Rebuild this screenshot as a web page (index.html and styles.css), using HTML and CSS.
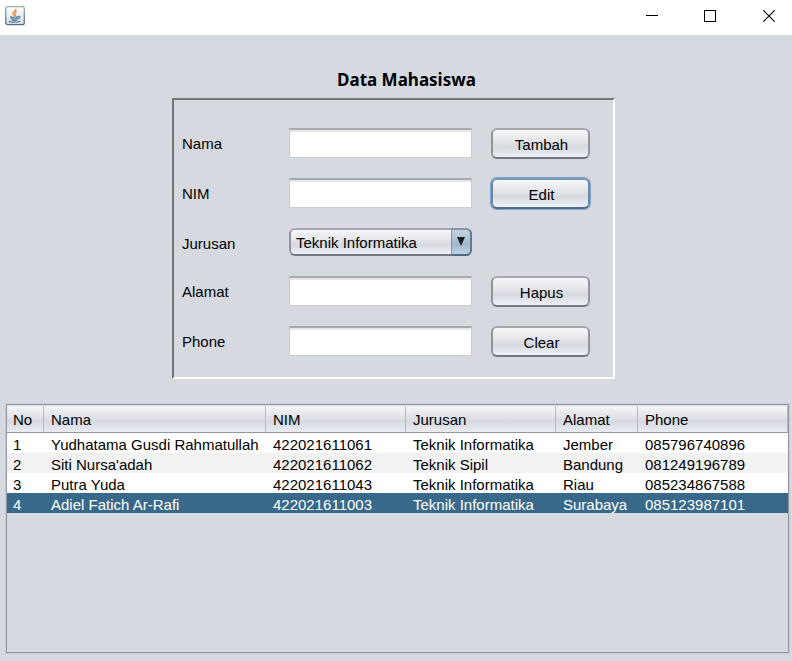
FILE: index.html
```html
<!DOCTYPE html>
<html lang="id">
<head>
<meta charset="utf-8">
<meta name="viewport" content="width=device-width, initial-scale=1">
<title>Data Mahasiswa</title>
<link rel="stylesheet" href="styles.css">
</head>
<body>
<header class="titlebar">
  <svg class="app-icon" width="20" height="20" viewBox="0 0 20 20" aria-hidden="true">
    <defs>
      <linearGradient id="tile" x1="0" y1="0" x2="0" y2="1">
        <stop offset="0" stop-color="#ffffff"/>
        <stop offset="1" stop-color="#d3dbe2"/>
      </linearGradient>
      <linearGradient id="edge" x1="0" y1="0" x2="0" y2="1">
        <stop offset="0" stop-color="#a3adb6"/>
        <stop offset="1" stop-color="#4f6f88"/>
      </linearGradient>
    </defs>
    <rect x="0.7" y="0.7" width="18.6" height="18" rx="2" fill="url(#tile)" stroke="url(#edge)" stroke-width="1.3"/>
    <path d="M10.7 2.8C11.3 5 7.6 5.6 8 7.6C8.2 8.7 9.2 9.2 9.3 10.2M11.9 5.2C9.8 6.2 9.3 6.9 10.3 8.2C10.9 9 10.3 9.7 9.9 10.2" fill="none" stroke="#ec9a55" stroke-width="1.5"/>
    <path d="M5.2 10.6C7 11.4 11 11.4 13.4 10.6M5.8 11.2C6 13.8 12.4 13.8 13 11.2M13.4 10.4C15.8 9.8 15.4 12 12.9 12.6M6.5 13.8C8 14.7 11 14.7 12.5 13.8M4 15C4.6 16.6 13.8 16.6 15.4 14.8" fill="none" stroke="#6588a3" stroke-width="1.2"/>
  </svg>
  <div class="window-controls">
    <button class="window-button" type="button" aria-label="Minimize">
      <svg width="12" height="12" viewBox="0 0 12 12"><path d="M0 5.5H12" stroke="#000"/></svg>
    </button>
    <button class="window-button" type="button" aria-label="Maximize">
      <svg width="12" height="12" viewBox="0 0 12 12"><rect x="0.5" y="0.5" width="11" height="11" fill="none" stroke="#000"/></svg>
    </button>
    <button class="window-button" type="button" aria-label="Close">
      <svg width="12" height="12" viewBox="0 0 12 12"><path d="M0.3 0.3L11.7 11.7M11.7 0.3L0.3 11.7" stroke="#000" stroke-width="1.1"/></svg>
    </button>
  </div>
</header>
<main class="content">
  <h1 class="title">Data Mahasiswa</h1>
  <form class="panel">
    <label class="label" for="nama">Nama</label>
    <input class="field" id="nama" type="text">
    <button class="button" type="button">Tambah</button>

    <label class="label" for="nim">NIM</label>
    <input class="field" id="nim" type="text">
    <button class="button button-active" type="button">Edit</button>

    <label class="label" for="jurusan">Jurusan</label>
    <div class="combo">
      <select class="combo-select" id="jurusan">
        <option>Teknik Informatika</option>
        <option>Teknik Sipil</option>
      </select>
    </div>

    <label class="label row-start" for="alamat">Alamat</label>
    <input class="field" id="alamat" type="text">
    <button class="button" type="button">Hapus</button>

    <label class="label" for="phone">Phone</label>
    <input class="field" id="phone" type="text">
    <button class="button" type="button">Clear</button>
  </form>
  <div class="table-pane">
    <table class="table">
      <colgroup>
        <col class="col-no"><col class="col-nama"><col class="col-nim"><col class="col-jurusan"><col class="col-alamat"><col>
      </colgroup>
      <thead>
        <tr><th>No</th><th>Nama</th><th>NIM</th><th>Jurusan</th><th>Alamat</th><th>Phone</th></tr>
      </thead>
      <tbody>
        <tr><td>1</td><td>Yudhatama Gusdi Rahmatullah</td><td>422021611061</td><td>Teknik Informatika</td><td>Jember</td><td>085796740896</td></tr>
        <tr><td>2</td><td>Siti Nursa'adah</td><td>422021611062</td><td>Teknik Sipil</td><td>Bandung</td><td>081249196789</td></tr>
        <tr><td>3</td><td>Putra Yuda</td><td>422021611043</td><td>Teknik Informatika</td><td>Riau</td><td>085234867588</td></tr>
        <tr class="selected"><td>4</td><td>Adiel Fatich Ar-Rafi</td><td>422021611003</td><td>Teknik Informatika</td><td>Surabaya</td><td>085123987101</td></tr>
      </tbody>
    </table>
  </div>
</main>
</body>
</html>
```
FILE: styles.css
```css
* {
  box-sizing: border-box;
}

body {
  margin: 0;
  min-height: 100vh;
  display: flex;
  flex-direction: column;
  background: #d6d9e0;
  color: #000;
  font: 15px/20px "Liberation Sans", Arial, sans-serif;
}

button,
input,
select {
  font: inherit;
  color: inherit;
}

.titlebar {
  display: flex;
  justify-content: space-between;
  height: 35px;
  padding-left: 5px;
  background: #fff;
}

.app-icon {
  margin-top: 6px;
}

.window-controls {
  display: flex;
}

.window-button {
  display: flex;
  align-items: center;
  justify-content: center;
  width: 58px;
  height: 32px;
  padding: 0;
  border: 0;
  background: none;
}

.window-button:last-child {
  width: 47px;
  padding-left: 1px;
}

.window-button:nth-child(2) {
  width: 58px;
}

.window-button:last-child {
  margin-left: 6px;
}

.content {
  flex: 1;
  display: flex;
  flex-direction: column;
  padding: 33px 3px 8px 6px;
}

.title {
  margin: 0 0 6px 18px;
  font: bold 17px/24px "Noto Sans", sans-serif;
  text-align: center;
}

.panel {
  align-self: center;
  display: grid;
  grid-template-columns: 107px 183px 99px;
  grid-template-rows: 50px 50px 48px 50px;
  grid-auto-rows: 51px;
  align-items: start;
  width: 100%;
  max-width: 443px;
  margin-right: 8px;
  padding: 28px 8px 0;
  border: 2px solid;
  border-color: #747678 #fff #fff #747678;
}

.label {
  line-height: 32px;
}

.row-start {
  grid-column: 1;
}

.field {
  width: 100%;
  height: 30px;
  padding: 0 6px;
  border: 1px solid #cbcccf;
  border-top: 2px solid #a8aaae;
  background: #fff;
  box-shadow: inset 0 2px 1px #e6e6e6;
  outline: 0;
}

.button {
  width: 100%;
  height: 31px;
  margin-left: 19px;
  padding: 2px 0 0 2px;
  border: 2px solid;
  border-color: #a5a7ad #929499 #74767d #929499;
  border-radius: 6px;
  background: linear-gradient(#f6f7f9, #e4e6ea 40%, #d6d9df 62%, #eef0f8);
}

.button-active {
  border-color: #7b96b0 #6f879f #526b84 #6f879f;
  box-shadow: 0 0 0 1px #79a5cf;
}

.combo {
  position: relative;
  height: 28px;
}

.combo-select {
  appearance: none;
  width: 100%;
  height: 100%;
  padding: 2px 24px 0 5px;
  border: 2px solid;
  border-color: #a5a7ad #929499 #74767d #929499;
  border-radius: 6px;
  background: linear-gradient(#f6f7f9, #e4e6ea 40%, #d6d9df 62%, #eef0f8);
  outline: 0;
}

.combo::before {
  content: "";
  position: absolute;
  inset: 0 0 0 auto;
  box-sizing: border-box;
  width: 21px;
  border: 2px solid;
  border-width: 2px 2px 2px 1px;
  border-color: #8195a8 #607a92 #526a80 #7c94ab;
  border-radius: 0 6px 6px 0;
  background: linear-gradient(#c6d3df, #a4b8ca 60%, #bdd3e8);
  pointer-events: none;
}

.combo::after {
  content: "";
  position: absolute;
  top: 9px;
  right: 7px;
  border: solid transparent;
  border-width: 9px 4px 0;
  border-top-color: #1d2126;
  pointer-events: none;
}

.table-pane {
  flex: 1;
  margin-top: 25px;
  padding: 1px 0 0;
  border: 1px solid #9297a1;
  box-shadow: 0 0 0 1px #c6cad3;
}

.table {
  width: 100%;
  table-layout: fixed;
  border-collapse: separate;
  border-spacing: 0;
}

.col-no { width: 37px; }
.col-nama { width: 222px; }
.col-nim { width: 140px; }
.col-jurusan { width: 150px; }
.col-alamat { width: 82px; }

.table th {
  height: 27px;
  padding: 1px 0 0 7px;
  border-right: 1px solid #b5b8c0;
  border-bottom: 1px solid #9297a1;
  background: linear-gradient(#f5f6f8, #dfe1e6 45%, #d6d9df 60%, #eaecf3);
  font-weight: normal;
  text-align: left;
}

.table td {
  height: 20px;
  padding: 4px 0 0 7px;
  background: #fff;
  line-height: 16px;
  white-space: nowrap;
}

.table th:first-child,
.table td:first-child {
  padding-left: 6px;
}

.table tr:nth-child(even) td {
  background: #f2f2f2;
}

.table tr.selected:nth-child(even) td {
  background: #39698a;
  color: #fff;
}
```
